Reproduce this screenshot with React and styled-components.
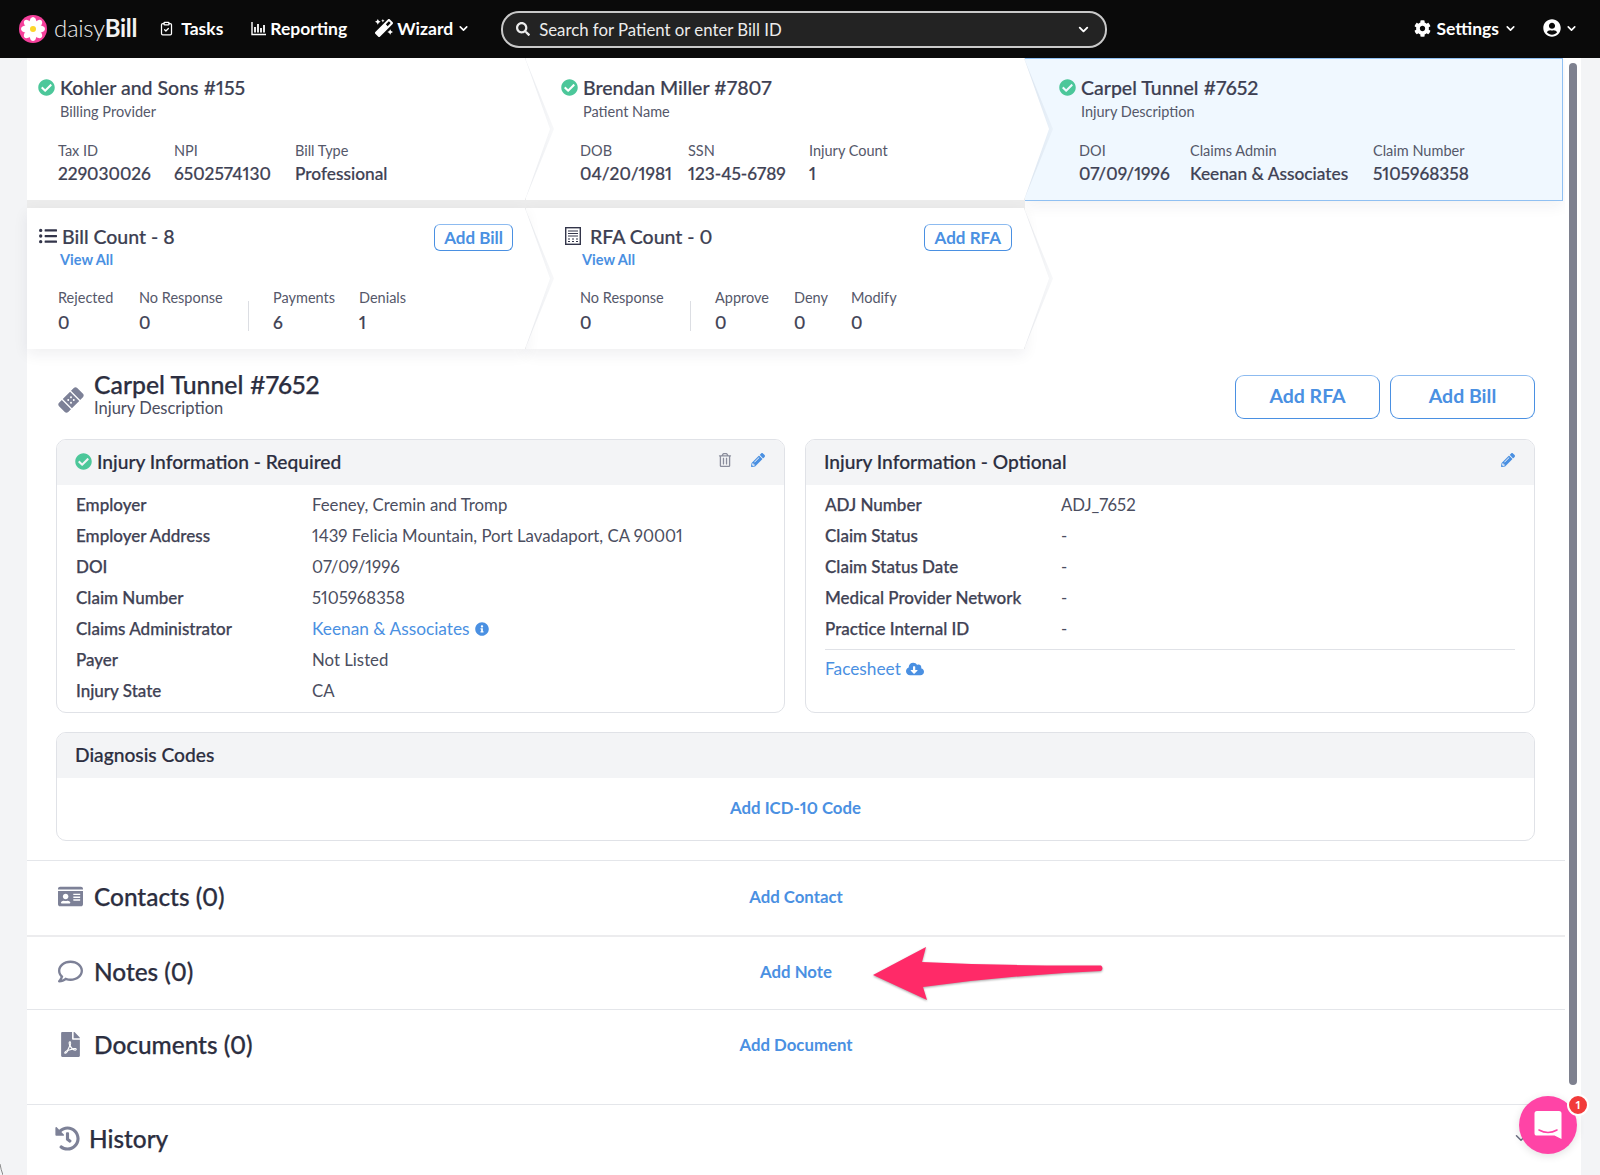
import React from 'react'
import styled, { createGlobalStyle } from 'styled-components'
import { ClipboardCheck, ChevronDown } from 'lucide-react'
import {
  FaBandAid, FaCheckCircle, FaCloudDownloadAlt, FaCog, FaFilePdf, FaHistory, FaIdCard, FaInfoCircle,
  FaListUl, FaMagic, FaPencilAlt, FaRegComment, FaRegTrashAlt, FaSearch, FaUserCircle,
} from 'react-icons/fa'

const Global = createGlobalStyle`
  html, body { margin: 0; padding: 0; background: #f3f4f6; }
  * { box-sizing: border-box; }
  body {
    font-family: "Lato", "Open Sans", sans-serif;
    font-variant-numeric: proportional-nums;
    color: #3f4254;
  }
`

const Page = styled.div`
  position: relative;
  width: 1600px;
  height: 1175px;
  overflow: hidden;
  background: #f3f4f6;
`

/* top bar */
const TopBar = styled.header`
  display: flex;
  align-items: center;
  height: 58px;
  padding: 0 22px 0 19px;
  background: #0a0a0a;
  color: #fff;
`
const Logo = styled.div`
  display: flex;
  align-items: center;
  gap: 7px;
  margin-right: 22px;
  font-size: 24px;
  font-weight: 300;
  letter-spacing: -0.3px;
  color: #e8e8e8;
  span { padding-bottom: 3px; }
  b { font-weight: 700; color: #f2f2f2; }
`
const NavItem = styled.div`
  display: flex;
  align-items: center;
  gap: ${p => p.$gap || 5}px;
  margin-right: ${p => p.$right || 0}px;
  padding-bottom: 2px;
  font-size: 17.5px;
  font-weight: 700;
  white-space: nowrap;
`
const SearchBox = styled.div`
  display: flex;
  align-items: center;
  gap: 9px;
  width: 606px;
  height: 37px;
  margin-left: 31px;
  padding: 0 14px 0 13px;
  border: 2px solid #c9c9c9;
  border-radius: 18px;
  background: #232323;
  font-size: 16.8px;
  color: #ececec;
  span { flex: 1; }
`
const TopRight = styled.div`
  display: flex;
  align-items: center;
  margin-left: auto;
`

/* layout */
const Body = styled.div`
  display: flex;
  height: 1117px;
  padding-left: 27px;
`
const Main = styled.main`
  width: 1538px;
  background: #fff;
`
const Track = styled.div`
  width: 16px;
  padding: 5px 4px 0;
  background: #fff;
`
const Thumb = styled.div`
  width: 8px;
  height: 1022px;
  border-radius: 4px;
  background: #7e818f;
`

/* wizard cards */
const CardRow = styled.div`
  display: flex;
  align-items: flex-start;
`
const Card = styled.section`
  position: relative;
  z-index: ${p => p.$z};
  flex: 0 0 ${p => p.$w}px;
  height: ${p => p.$h}px;
  padding: ${p => p.$top}px 0 0 ${p => p.$pad}px;
  background: #fff;
  border-right: 1px solid #ececec;
  border-bottom: ${p => (p.$band ? '8px solid #ececec' : '0')};
  box-shadow: ${p => (p.$lift ? '0 5px 14px rgba(30, 35, 60, 0.07)' : 'none')};
  &::before, &::after {
    content: "";
    position: absolute;
    left: 100%;
    top: 0;
    bottom: 0;
    clip-path: polygon(0 0, 100% 50%, 0 100%);
  }
  &::before { width: 29px; background: linear-gradient(90deg, rgba(30, 50, 90, 0.1), rgba(30, 50, 90, 0.03)); }
  &::after { width: 25px; background: #fff; }
`
const ActiveCard = styled.section`
  flex: 0 0 538px;
  height: 143px;
  padding: 17px 0 0 54px;
  background: #f0f8ff;
  border: 1px solid #90c0f2;
  border-left: 0;
  box-shadow: 0 5px 14px rgba(30, 35, 60, 0.06);
`
const CardHead = styled.div`
  display: flex;
  align-items: center;
  gap: ${p => p.$gap || 5}px;
  height: 22px;
  margin-left: ${p => p.$shift || 0}px;
  font-size: 19.5px;
  font-weight: 500;
  -webkit-text-stroke: 0.2px currentColor;
  color: #3d3f52;
  white-space: nowrap;
  svg { flex: none; }
`
const CardSub = styled.div`
  height: 18px;
  margin: ${p => p.$top || 5}px 0 0 ${p => p.$left}px;
  font-size: 14.5px;
  line-height: 18px;
  color: #55586a;
`
const LinkSub = styled(CardSub)`
  color: #4a90e2;
  font-weight: 700;
`
const Stats = styled.div`
  display: flex;
  margin: ${p => p.$top}px 0 0 ${p => p.$left || 0}px;
`
const Stat = styled.div`
  flex: none;
  width: ${p => (p.$w ? `${p.$w}px` : 'auto')};
  white-space: nowrap;
  small {
    display: block;
    height: ${p => p.$lh}px;
    font-size: 14.5px;
    line-height: 20px;
    color: #55586a;
  }
  strong {
    display: block;
    height: 26px;
    font-size: 17.3px;
    line-height: 26px;
    font-weight: 500;
    -webkit-text-stroke: 0.2px currentColor;
    color: #3f4254;
  }
`
const StatDivider = styled.div`
  align-self: flex-end;
  width: 1px;
  height: 30px;
  margin: 0 24px 5px 0;
  background: #dcdee3;
`
const GreenCheck = styled(FaCheckCircle)`
  color: #4cc79a;
`
const SmallButton = styled.button`
  position: absolute;
  top: 16px;
  right: ${p => p.$right}px;
  height: 27px;
  padding: 0 ${p => p.$pad || 9}px;
  border: 1px solid #4a90e2;
  border-top-color: #8dbbf0;
  border-radius: 6px;
  background: #fff;
  font: 700 17px "Lato", sans-serif;
  color: #4a90e2;
`

/* injury section */
const Content = styled.div`
  padding: 26px 30px 19px 29px;
`
const TitleRow = styled.div`
  display: flex;
  align-items: center;
  height: 44px;
  margin-bottom: 20px;
`
const BandIcon = styled(FaBandAid)`
  margin: 5px 10px 0 2px;
  color: #7d8197;
  transform: rotate(-45deg);
`
const TitleText = styled.div`
  margin-top: -4px;
  h1 {
    margin: 0;
    font-size: 24.8px;
    line-height: 26px;
    font-weight: 500;
    -webkit-text-stroke: 0.25px currentColor;
    color: #2c2e40;
  }
  p { margin: 0; font-size: 16.5px; line-height: 20px; color: #4b4e60; }
`
const TitleButtons = styled.div`
  display: flex;
  gap: 10px;
  margin-left: auto;
`
const BigButton = styled.button`
  width: 145px;
  height: 44px;
  padding: 0 0 3px;
  border: 1px solid #4a90e2;
  border-top-color: #8dbbf0;
  border-radius: 9px;
  background: #fff;
  font: 700 19.5px "Lato", sans-serif;
  color: #4a90e2;
`
const Panels = styled.div`
  display: grid;
  grid-template-columns: 729px 730px;
  gap: 20px;
`
const Panel = styled.section`
  border: 1px solid #e0e2e7;
  border-radius: 10px;
  overflow: hidden;
  background: #fff;
`
const PanelHead = styled.div`
  display: flex;
  align-items: center;
  gap: 5px;
  height: 45px;
  padding: 0 19px 3px 18px;
  background: #f3f4f6;
  font-size: 19.2px;
  font-weight: 500;
  -webkit-text-stroke: 0.2px currentColor;
  color: #2c2e40;
`
const PanelTools = styled.div`
  display: flex;
  align-items: center;
  gap: 19px;
  margin-left: auto;
  padding-bottom: 2px;
  color: #4a90e2;
`
const PanelBody = styled.div`
  padding: 4px 19px 6px;
`
const InfoRow = styled.div`
  display: grid;
  grid-template-columns: 236px 1fr;
  height: 31px;
  align-items: center;
  font-size: 16.8px;
  color: #4b4e60;
  b {
    font-size: 17px;
    font-weight: 500;
    -webkit-text-stroke: 0.25px currentColor;
    color: #3f4254;
  }
`
const FacesheetRow = styled.div`
  display: flex;
  align-items: center;
  height: 31px;
`
const BlueLink = styled.a`
  display: inline-flex;
  align-items: center;
  gap: 5px;
  font-size: 17.3px;
  color: #4a90e2;
`
const PanelLine = styled.div`
  margin: 5px 0 3px;
  border-top: 1px solid #e0e2e7;
`
const DiagnosisPanel = styled(Panel)`
  height: 109px;
  margin-top: 19px;
`
const CenterLink = styled.a`
  font-size: 16.8px;
  font-weight: 700;
  color: #4a90e2;
  text-align: center;
  white-space: nowrap;
`
const DiagnosisBody = styled.div`
  padding-top: 19px;
  text-align: center;
`

/* lower rows */
const ListRow = styled.section`
  display: grid;
  grid-template-columns: 1fr auto 1fr;
  align-items: center;
  align-content: start;
  height: ${p => p.$h}px;
  padding-top: ${p => p.$top}px;
  border-top: ${p => (p.$thick ? '2px solid #ececee' : '1px solid #e4e6ea')};
`
const ListTitle = styled.h2`
  display: flex;
  align-items: center;
  height: 30px;
  margin: 0;
  padding-left: ${p => p.$left || 31}px;
  font-size: 24.4px;
  font-weight: 500;
  -webkit-text-stroke: 0.25px currentColor;
  color: #2c2e40;
`
const ListIcon = styled.span`
  display: flex;
  width: 36px;
  padding-left: ${p => p.$pad || 0}px;
  color: #7d8197;
`
const HistoryChevron = styled.div`
  justify-self: end;
  margin-right: 35px;
  color: #6b6f82;
  line-height: 0;
`

/* things lying on top */
const Arrow = styled.svg`
  position: absolute;
  left: 860px;
  top: 935px;
  overflow: visible;
  filter: drop-shadow(0 1px 1px rgba(0, 0, 0, 0.35));
`
const Bubble = styled.div`
  position: absolute;
  left: 1519px;
  top: 1096px;
  display: flex;
  align-items: center;
  justify-content: center;
  width: 58px;
  height: 58px;
  border-radius: 50%;
  background: #ff44a6;
  box-shadow: 0 2px 8px rgba(0, 0, 0, 0.12);
`
const Badge = styled.div`
  position: absolute;
  right: -12px;
  top: -2px;
  width: 22px;
  height: 22px;
  border: 2px solid #fff;
  border-radius: 50%;
  background: #f23b3b;
  font-size: 12px;
  font-weight: 700;
  line-height: 18px;
  text-align: center;
  color: #fff;
`
const WindowCorner = styled.svg`
  position: absolute;
  left: 0;
  bottom: 0;
`

const Daisy = () => (
  <svg width="28" height="28" viewBox="0 0 28 28">
    <circle cx="14" cy="14" r="14" fill="#f5409b" />
    {[0, 45, 90, 135, 180, 225, 270, 315].map(a => (
      <ellipse key={a} cx="14" cy="7.2" rx="3.4" ry="5.2" fill="#fff" transform={`rotate(${a} 14 14)`} />
    ))}
    <circle cx="14" cy="14" r="3" fill="#fcd62a" />
  </svg>
)

const BarsIcon = () => (
  <svg width="16" height="15" viewBox="0 0 16 15" fill="none" stroke="#fff">
    <path d="M1 1v12.5h14" strokeWidth="1.4" />
    <path d="M4 6v5.5M7 3v8.5M10 7v4.5M13 4v7.5" strokeWidth="1.8" />
  </svg>
)

const RfaIcon = () => (
  <svg width="16" height="18" viewBox="0 0 16 18" fill="none" stroke="#33354a">
    <rect x="0.7" y="0.7" width="14.6" height="16.6" strokeWidth="1.4" />
    <path d="M3 4h10M3 6.5h10M3 9h10" strokeWidth="1.1" />
    <path d="M3 12h2M7 12h2M11 12h2M3 14.5h2M7 14.5h2M11 14.5h2" strokeWidth="1.2" />
  </svg>
)

const ChatIcon = () => (
  <svg width="28" height="30" viewBox="0 0 28 30">
    <path d="M3 1h22a2.5 2.5 0 0 1 2.5 2.5V29l-7-3.4H3A2.5 2.5 0 0 1 .5 23V3.5A2.5 2.5 0 0 1 3 1z" fill="#fff" />
    <path d="M5 20c5.5 3 12.5 3 18 0" fill="none" stroke="#ff44a6" strokeWidth="1.6" strokeLinecap="round" />
  </svg>
)

const Chevron = ({ size = 13, color = '#fff', w = 3 }) => <ChevronDown size={size} color={color} strokeWidth={w} />

const requiredRows = [
  ['Employer', 'Feeney, Cremin and Tromp'],
  ['Employer Address', '1439 Felicia Mountain, Port Lavadaport, CA 90001'],
  ['DOI', '07/09/1996'],
  ['Claim Number', '5105968358'],
  ['Claims Administrator', <BlueLink key="k">Keenan &amp; Associates <FaInfoCircle size={14} /></BlueLink>],
  ['Payer', 'Not Listed'],
  ['Injury State', 'CA'],
]
const optionalRows = [
  ['ADJ Number', 'ADJ_7652'],
  ['Claim Status', '-'],
  ['Claim Status Date', '-'],
  ['Medical Provider Network', '-'],
  ['Practice Internal ID', '-'],
]

const InfoRows = ({ rows }) => rows.map(([label, value]) => (
  <InfoRow key={label}><b>{label}</b><span>{value}</span></InfoRow>
))

// each item: label, value, column width
const StatList = ({ items, lh }) => items.map(([label, value, w]) => (
  <Stat key={label} $w={w} $lh={lh}><small>{label}</small><strong>{value}</strong></Stat>
))

const App = () => {
  return (
    <Page>
      <Global />
      <TopBar>
        <Logo><Daisy /><span>daisy<b>Bill</b></span></Logo>
        <NavItem $gap={7} $right={28}><ClipboardCheck size={15} />Tasks</NavItem>
        <NavItem $gap={3} $right={28}><BarsIcon />Reporting</NavItem>
        <NavItem $gap={4}><FaMagic size={18} />Wizard<Chevron /></NavItem>
        <SearchBox>
          <FaSearch size={14} />
          <span>Search for Patient or enter Bill ID</span>
          <Chevron size={15} />
        </SearchBox>
        <TopRight>
          <NavItem $gap={5} $right={26}><FaCog size={17} />Settings<Chevron /></NavItem>
          <NavItem $gap={4}><FaUserCircle size={18} /><Chevron /></NavItem>
        </TopRight>
      </TopBar>

      <Body>
        <Main>
          <CardRow>
            <Card $w={499} $h={150} $z={3} $band $top={18} $pad={11}>
              <CardHead><GreenCheck size={17} />Kohler and Sons #155</CardHead>
              <CardSub $left={22}>Billing Provider</CardSub>
              <Stats $top={20} $left={20}>
                <StatList lh={20} items={[['Tax ID', '229030026', 116], ['NPI', '6502574130', 121], ['Bill Type', 'Professional']]} />
              </Stats>
            </Card>
            <Card $w={499} $h={150} $z={2} $band $top={18} $pad={35}>
              <CardHead><GreenCheck size={17} />Brendan Miller #7807</CardHead>
              <CardSub $left={22}>Patient Name</CardSub>
              <Stats $top={20} $left={19}>
                <StatList lh={20} items={[['DOB', '04/20/1981', 108], ['SSN', '123-45-6789', 121], ['Injury Count', '1']]} />
              </Stats>
            </Card>
            <ActiveCard>
              <CardHead $shift={-20}><GreenCheck size={17} />Carpel Tunnel #7652</CardHead>
              <CardSub $left={2}>Injury Description</CardSub>
              <Stats $top={20}>
                <StatList lh={20} items={[['DOI', '07/09/1996', 111], ['Claims Admin', 'Keenan & Associates', 183], ['Claim Number', '5105968358']]} />
              </Stats>
            </ActiveCard>
          </CardRow>

          <CardRow>
            <Card $w={499} $h={141} $z={3} $lift $top={17} $pad={12}>
              <CardHead $gap={5}><FaListUl size={18} color="#33354a" />Bill Count - 8</CardHead>
              <LinkSub $left={21} $top={4}>View All</LinkSub>
              <Stats $top={19} $left={19}>
                <StatList lh={22} items={[['Rejected', '0', 81], ['No Response', '0', 109]]} />
                <StatDivider />
                <StatList lh={22} items={[['Payments', '6', 86], ['Denials', '1']]} />
              </Stats>
              <SmallButton $right={12}>Add Bill</SmallButton>
            </Card>
            <Card $w={499} $h={141} $z={2} $lift $top={17} $pad={39}>
              <CardHead $gap={9}><RfaIcon />RFA Count - 0</CardHead>
              <LinkSub $left={17} $top={4}>View All</LinkSub>
              <Stats $top={19} $left={15}>
                <StatList lh={22} items={[['No Response', '0', 110]]} />
                <StatDivider />
                <StatList lh={22} items={[['Approve', '0', 79], ['Deny', '0', 57], ['Modify', '0']]} />
              </Stats>
              <SmallButton $right={12} $pad={10}>Add RFA</SmallButton>
            </Card>
          </CardRow>

          <Content>
            <TitleRow>
              <BandIcon size={26} />
              <TitleText>
                <h1>Carpel Tunnel #7652</h1>
                <p>Injury Description</p>
              </TitleText>
              <TitleButtons>
                <BigButton>Add RFA</BigButton>
                <BigButton>Add Bill</BigButton>
              </TitleButtons>
            </TitleRow>

            <Panels>
              <Panel>
                <PanelHead>
                  <GreenCheck size={17} />Injury Information - Required
                  <PanelTools>
                    <FaRegTrashAlt size={14} color="#8a8d9c" />
                    <FaPencilAlt size={14} />
                  </PanelTools>
                </PanelHead>
                <PanelBody><InfoRows rows={requiredRows} /></PanelBody>
              </Panel>
              <Panel>
                <PanelHead>
                  Injury Information - Optional
                  <PanelTools><FaPencilAlt size={14} /></PanelTools>
                </PanelHead>
                <PanelBody>
                  <InfoRows rows={optionalRows} />
                  <PanelLine />
                  <FacesheetRow><BlueLink>Facesheet <FaCloudDownloadAlt size={18} /></BlueLink></FacesheetRow>
                </PanelBody>
              </Panel>
            </Panels>

            <DiagnosisPanel>
              <PanelHead>Diagnosis Codes</PanelHead>
              <DiagnosisBody><CenterLink>Add ICD-10 Code</CenterLink></DiagnosisBody>
            </DiagnosisPanel>
          </Content>

          <ListRow $h={75} $top={20}>
            <ListTitle><ListIcon><FaIdCard size={25} /></ListIcon>Contacts (0)</ListTitle>
            <CenterLink>Add Contact</CenterLink>
          </ListRow>
          <ListRow $h={74} $top={19} $thick>
            <ListTitle><ListIcon><FaRegComment size={25} /></ListIcon>Notes (0)</ListTitle>
            <CenterLink>Add Note</CenterLink>
          </ListRow>
          <ListRow $h={95} $top={19}>
            <ListTitle><ListIcon><FaFilePdf size={25} /></ListIcon>Documents (0)</ListTitle>
            <CenterLink>Add Document</CenterLink>
          </ListRow>
          <ListRow $h={71} $top={18}>
            <ListTitle $left={26}><ListIcon $pad={2}><FaHistory size={25} /></ListIcon>History</ListTitle>
            <span />
            <HistoryChevron><Chevron size={18} color="#6b6f82" w={2} /></HistoryChevron>
          </ListRow>
        </Main>
        <Track><Thumb /></Track>
      </Body>

      <Arrow width="245" height="70" viewBox="0 0 245 70">
        <path d="M13 40 L66 12 L62 27 Q150 31 241 30.5 Q244 33 241 36 Q150 40 63 52 L67 65 Z" fill="#ff2a68" />
      </Arrow>

      <Bubble>
        <ChatIcon />
        <Badge>1</Badge>
      </Bubble>
      <WindowCorner width="3" height="11" viewBox="0 0 3 11" fill="none" stroke="#8a8a8a">
        <path d="M0 0Q1 6 3 11" />
      </WindowCorner>
    </Page>
  )
}

export default App
